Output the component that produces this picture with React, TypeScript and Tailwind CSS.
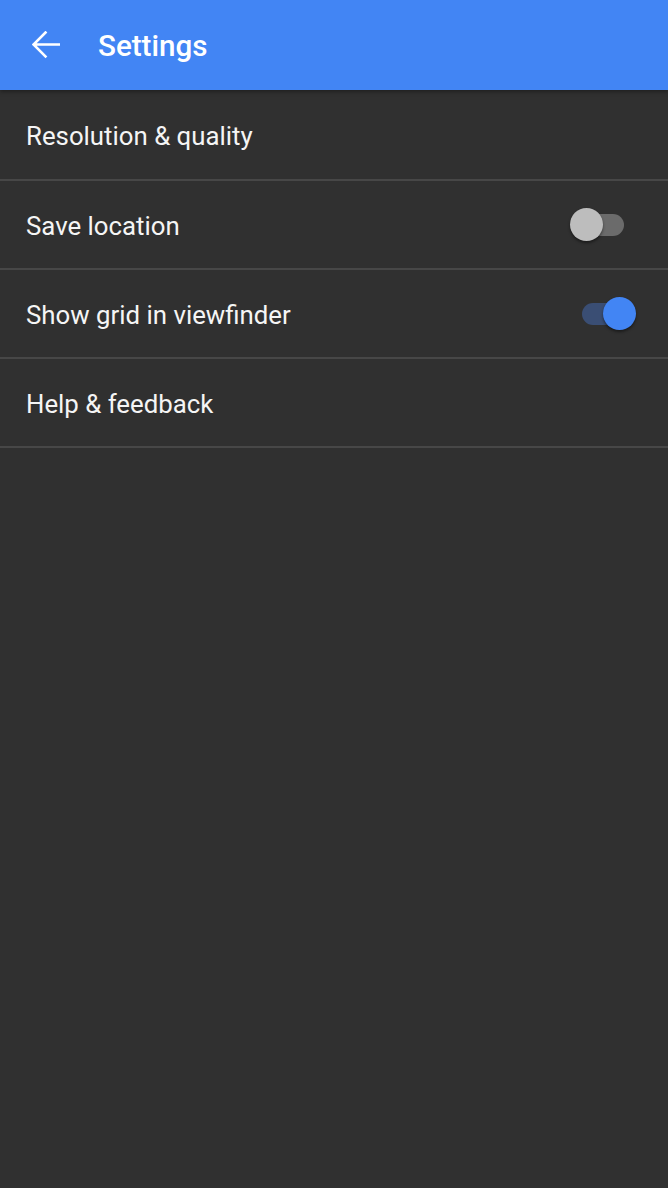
import React from "react";

function Toggle({ on }: { on: boolean }) {
  return (
    <div
      className={
        "relative w-[42px] h-[22px] rounded-full " +
        (on ? "bg-[#3a4e74]" : "bg-[#6b6b6b]")
      }
    >
      <div
        className={
          "absolute top-[-5.5px] w-[33px] h-[33px] rounded-full shadow-[0_2px_3px_rgba(0,0,0,0.45)] " +
          (on ? "left-[21px] bg-[#4285f4]" : "left-[-12px] bg-[#bdbdbd]")
        }
      />
    </div>
  );
}

function Row({
  label,
  toggle,
  first,
}: {
  label: string;
  toggle?: boolean;
  first?: boolean;
}) {
  return (
    <div
      className={
        "flex items-center justify-between border-b-2 border-[#474747] pl-[26px] pr-[44px] " +
        (first ? "h-[91px]" : "h-[89px]")
      }
    >
      <span className="text-[25.8px] text-[#f5f5f5] leading-none pt-[4px]">{label}</span>
      {toggle !== undefined && <Toggle on={toggle} />}
    </div>
  );
}

export default function App() {
  return (
    <div
      className="w-[668px] h-[1188px] bg-[#303030] overflow-hidden"
      style={{ fontFamily: "Roboto, 'Noto Sans', sans-serif" }}
    >
      <div className="relative z-10 h-[90px] bg-[#4285f4] flex items-center shadow-[0_2px_4px_rgba(0,0,0,0.35)]">
        <div className="w-[98px] flex items-center pl-[32px]">
          <svg width="28" height="28" viewBox="0 0 28 28" fill="none">
            <path
              d="M2 13.5H27M13.5 1.5L1.5 13.5L13.5 25.5"
              stroke="white"
              strokeWidth="2.6"
              strokeLinecap="square"
              strokeLinejoin="miter"
            />
          </svg>
        </div>
        <span className="text-[29.6px] font-medium text-white leading-none pt-[4px]">Settings</span>
      </div>
      <Row label="Resolution & quality" first />
      <Row label="Save location" toggle={false} />
      <Row label="Show grid in viewfinder" toggle={true} />
      <Row label="Help & feedback" />
    </div>
  );
}
